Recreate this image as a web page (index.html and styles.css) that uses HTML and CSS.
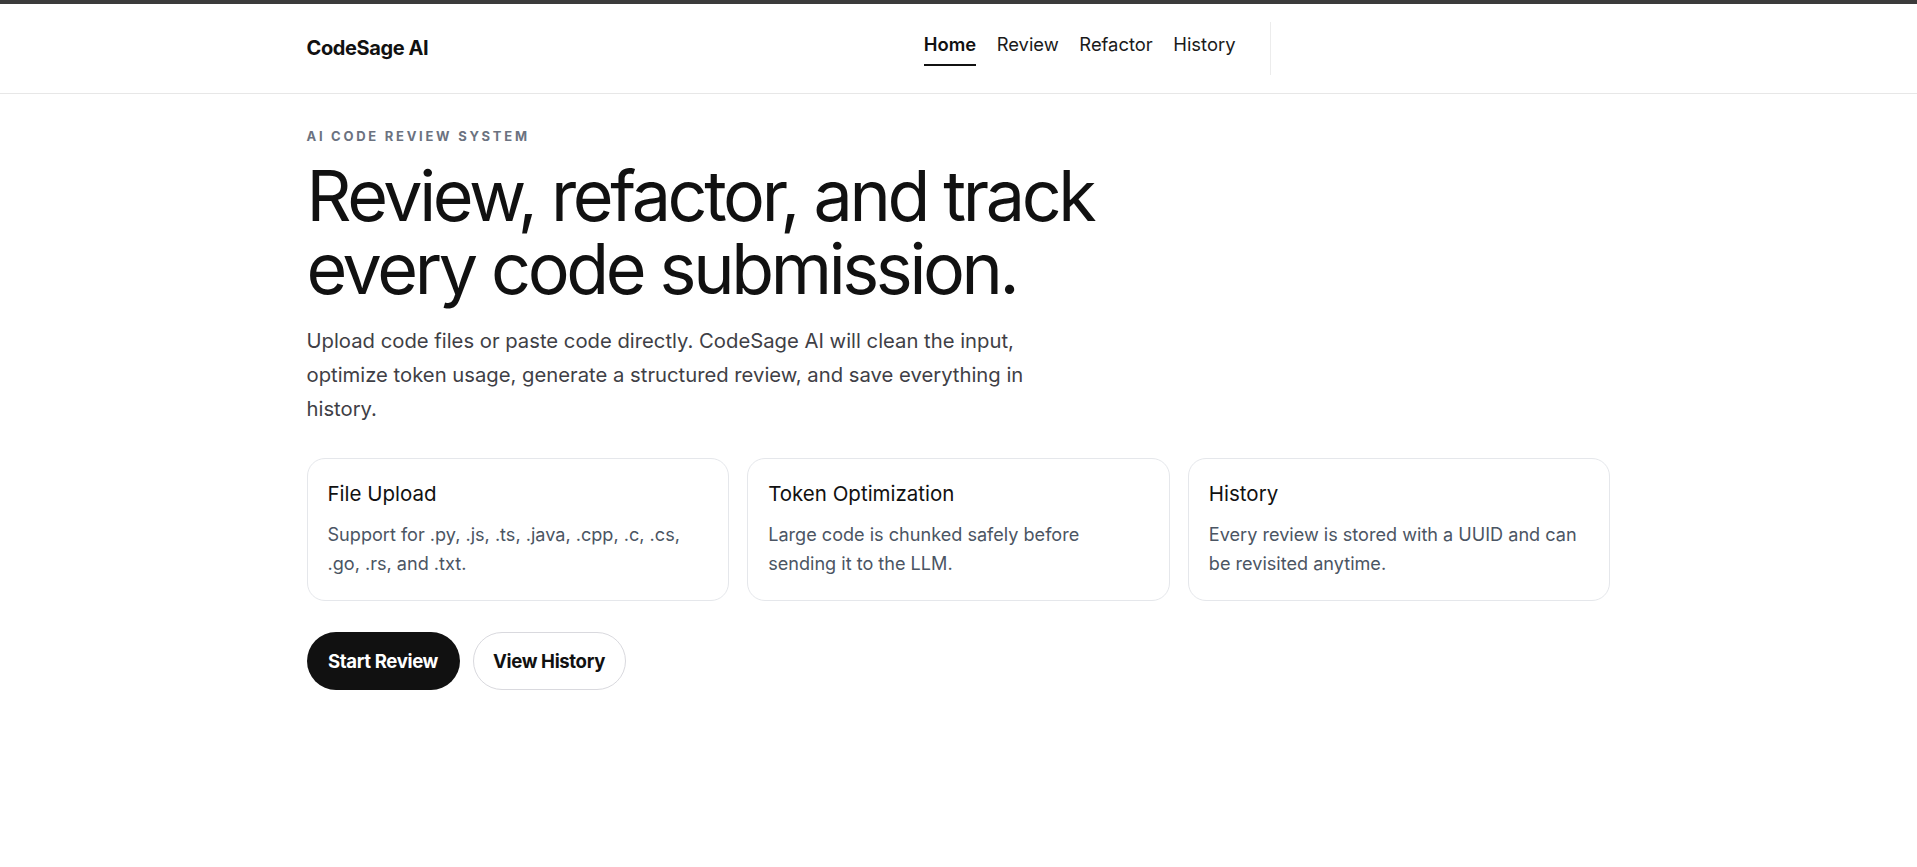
FILE: index.html
```html
<!DOCTYPE html>
<html lang="en">
<head>
<meta charset="utf-8">
<title>CodeSage AI</title>
<link rel="stylesheet" href="styles.css">
</head>
<body>
  <header class="site-header">
    <div class="container header-inner">
      <a class="brand" href="#">CodeSage AI</a>
      <div class="header-right">
        <nav class="main-nav">
          <a class="nav-link is-active" href="#">Home</a>
          <a class="nav-link" href="#">Review</a>
          <a class="nav-link" href="#">Refactor</a>
          <a class="nav-link" href="#">History</a>
        </nav>
        <span class="nav-divider"></span>
        <div class="header-actions"></div>
      </div>
    </div>
  </header>

  <main class="container hero">
    <p class="eyebrow">AI Code Review System</p>
    <h1 class="hero-title"><span class="title-line">Review, refactor, and track</span><span class="title-line">every code submission.</span></h1>
    <p class="hero-lead">Upload code files or paste code directly. CodeSage AI will clean the input, optimize token usage, generate a structured review, and save everything in history.</p>

    <section class="features">
      <article class="feature-card">
        <h3 class="feature-title">File Upload</h3>
        <p class="feature-text">Support for .py, .js, .ts, .java, .cpp, .c, .cs, .go, .rs, and .txt.</p>
      </article>
      <article class="feature-card">
        <h3 class="feature-title">Token Optimization</h3>
        <p class="feature-text">Large code is chunked safely before sending it to the LLM.</p>
      </article>
      <article class="feature-card">
        <h3 class="feature-title">History</h3>
        <p class="feature-text">Every review is stored with a UUID and can be revisited anytime.</p>
      </article>
    </section>

    <div class="actions">
      <a class="btn btn-primary" href="#">Start Review</a>
      <a class="btn btn-outline" href="#">View History</a>
    </div>
  </main>
</body>
</html>
```

FILE: styles.css
```css
* {
  box-sizing: border-box;
}

html, body {
  margin: 0;
  padding: 0;
}

body {
  background: #ffffff;
  color: #111111;
  font-family: Inter, "Noto Sans", "Liberation Sans", sans-serif;
  border-top: 4px solid #3b3b3b;
  -webkit-font-smoothing: antialiased;
}

a {
  color: inherit;
  text-decoration: none;
}

.container {
  width: 1304px;
  margin: 0 auto;
}

/* Header */
.site-header {
  border-bottom: 1px solid #e7e7e7;
  background: #ffffff;
}

.header-inner {
  height: 89px;
  display: flex;
  align-items: center;
  justify-content: space-between;
}

.brand {
  font-size: 20px;
  font-weight: 700;
  letter-spacing: -0.02em;
  color: #111111;
  margin-top: -1px;
}

.header-right {
  display: flex;
  align-items: center;
  gap: 34px;
  height: 100%;
}

.main-nav {
  display: flex;
  align-items: center;
  gap: 20.5px;
}

.nav-link {
  position: relative;
  font-size: 18.4px;
  font-weight: 400;
  color: #1a1a1a;
  padding: 6px 0;
  margin-top: -10px;
}

.nav-link.is-active {
  font-weight: 600;
  color: #111111;
}

.nav-link.is-active::after {
  content: "";
  position: absolute;
  left: 0;
  right: 0;
  bottom: -5px;
  height: 2px;
  background: #111111;
}

.nav-divider {
  width: 1px;
  height: 53px;
  background: #ececec;
}

.header-actions {
  width: 306px;
}

/* Hero */
.hero {
  padding-top: 34px;
  padding-bottom: 60px;
}

.eyebrow {
  margin: 0;
  font-size: 13px;
  line-height: 16px;
  font-weight: 700;
  letter-spacing: 0.21em;
  text-transform: uppercase;
  color: #6b7280;
}

.hero-title {
  margin: 15px 0 0;
  font-size: 70px;
  line-height: 73px;
  font-weight: 400;
  letter-spacing: -0.048em;
  color: #111111;
}

.title-line {
  display: block;
}

.hero-lead {
  margin: 19px 0 0;
  max-width: 750px;
  font-size: 20.25px;
  line-height: 34.2px;
  color: #3f3f46;
}

/* Feature cards */
.features {
  margin-top: 31px;
  display: grid;
  grid-template-columns: repeat(3, 1fr);
  gap: 18px;
}

.feature-card {
  border: 1px solid #e5e7eb;
  border-radius: 18px;
  padding: 22px 24px 22px 20px;
  background: #ffffff;
}

.feature-title {
  margin: 0;
  font-size: 20.5px;
  line-height: 26px;
  font-weight: 400;
  color: #111111;
}

.feature-text {
  margin: 13px 0 0;
  font-size: 18.1px;
  line-height: 29px;
  color: #4b5563;
}

/* Buttons */
.actions {
  margin-top: 31px;
  display: flex;
  gap: 13px;
}

.btn {
  display: inline-flex;
  align-items: center;
  justify-content: center;
  height: 58px;
  width: 153px;
  border-radius: 999px;
  font-size: 18.6px;
  font-weight: 700;
  letter-spacing: -0.02em;
}

.btn-primary {
  background: #111111;
  color: #ffffff;
}

.btn-outline {
  background: #ffffff;
  color: #111111;
  border: 1px solid #d9d9de;
}
```
